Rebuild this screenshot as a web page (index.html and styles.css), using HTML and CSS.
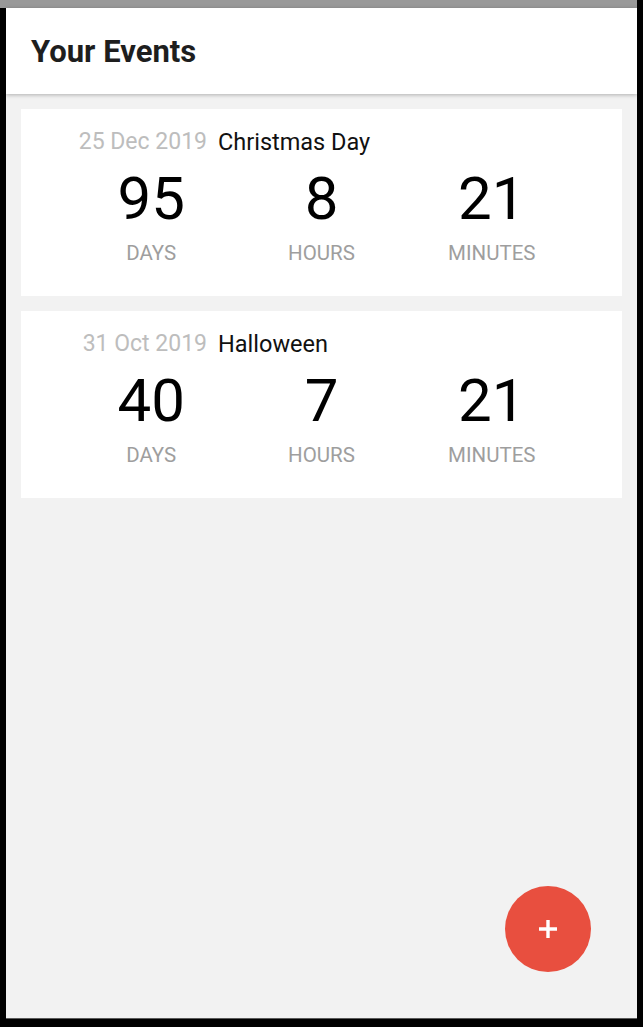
FILE: index.html
```html
<!DOCTYPE html>
<html>
<head>
<meta charset="utf-8">
<link rel="stylesheet" href="styles.css">
</head>
<body>
<div class="device">
  <div class="statusbar"></div>
  <div class="screen">
    <header class="appbar"><h1 class="title">Your Events</h1></header>
    <main class="list">
      <section class="card">
        <div class="card-head">
          <span class="date">25 Dec 2019</span>
          <span class="name">Christmas Day</span>
        </div>
        <div class="counts">
          <div class="count"><div class="num">95</div><div class="unit">DAYS</div></div>
          <div class="count"><div class="num">8</div><div class="unit">HOURS</div></div>
          <div class="count"><div class="num">21</div><div class="unit">MINUTES</div></div>
        </div>
      </section>
      <section class="card">
        <div class="card-head">
          <span class="date">31 Oct 2019</span>
          <span class="name">Halloween</span>
        </div>
        <div class="counts">
          <div class="count"><div class="num">40</div><div class="unit">DAYS</div></div>
          <div class="count"><div class="num">7</div><div class="unit">HOURS</div></div>
          <div class="count"><div class="num">21</div><div class="unit">MINUTES</div></div>
        </div>
      </section>
    </main>
    <button class="fab" aria-label="Add event">
      <svg width="18" height="18" viewBox="0 0 18 18"><path d="M9 0V18M0 9H18" stroke="#fff" stroke-width="3.4" fill="none"/></svg>
    </button>
  </div>
</div>
</body>
</html>
```
FILE: styles.css
```css
html, body {
  margin: 0;
  padding: 0;
  background: #000;
  width: 643px;
  height: 1027px;
  overflow: hidden;
  font-family: Roboto, "Noto Sans", Arial, sans-serif;
}
.device {
  width: 637px;
}
.statusbar {
  height: 8px;
  background: #999;
}
.screen {
  position: relative;
  margin-left: 6px;
  width: 631px;
  height: 1011px;
  background: #f2f2f2;
  border-bottom: 1px solid #5a5a5a;
  box-sizing: border-box;
}
.appbar {
  height: 86px;
  background: #fff;
  display: flex;
  align-items: center;
  padding-left: 25px;
  box-shadow: 0 1px 4px rgba(0,0,0,0.28);
  position: relative;
}
.title {
  margin: 0;
  font-size: 31px;
  font-weight: 700;
  color: #1e1e1e;
  padding-top: 1px;
}
.list {
  display: flex;
  flex-direction: column;
  gap: 15px;
  padding: 15px 15px 0 15px;
}
.card {
  background: #fff;
  padding: 20px 45px 32px 45px;
}
.card-head {
  display: flex;
  gap: 11px;
  font-size: 23px;
  line-height: 26px;
}
.date {
  width: 141px;
  text-align: right;
  color: #bdbdbd;
  white-space: nowrap;
}
.name {
  color: #111;
  font-size: 23.5px;
}
.counts {
  display: grid;
  grid-template-columns: 1fr 1fr 1fr;
  margin-top: 9px;
  text-align: center;
}
.num {
  font-size: 60px;
  line-height: 70px;
  color: #000;
}
.unit {
  margin-top: 8px;
  font-size: 20.5px;
  line-height: 22px;
  color: #9e9e9e;
}
.fab {
  position: absolute;
  right: 46px;
  bottom: 46px;
  width: 86px;
  height: 86px;
  border-radius: 50%;
  border: none;
  background: #e84f3f;
  display: flex;
  align-items: center;
  justify-content: center;
  padding: 0;
}
```
